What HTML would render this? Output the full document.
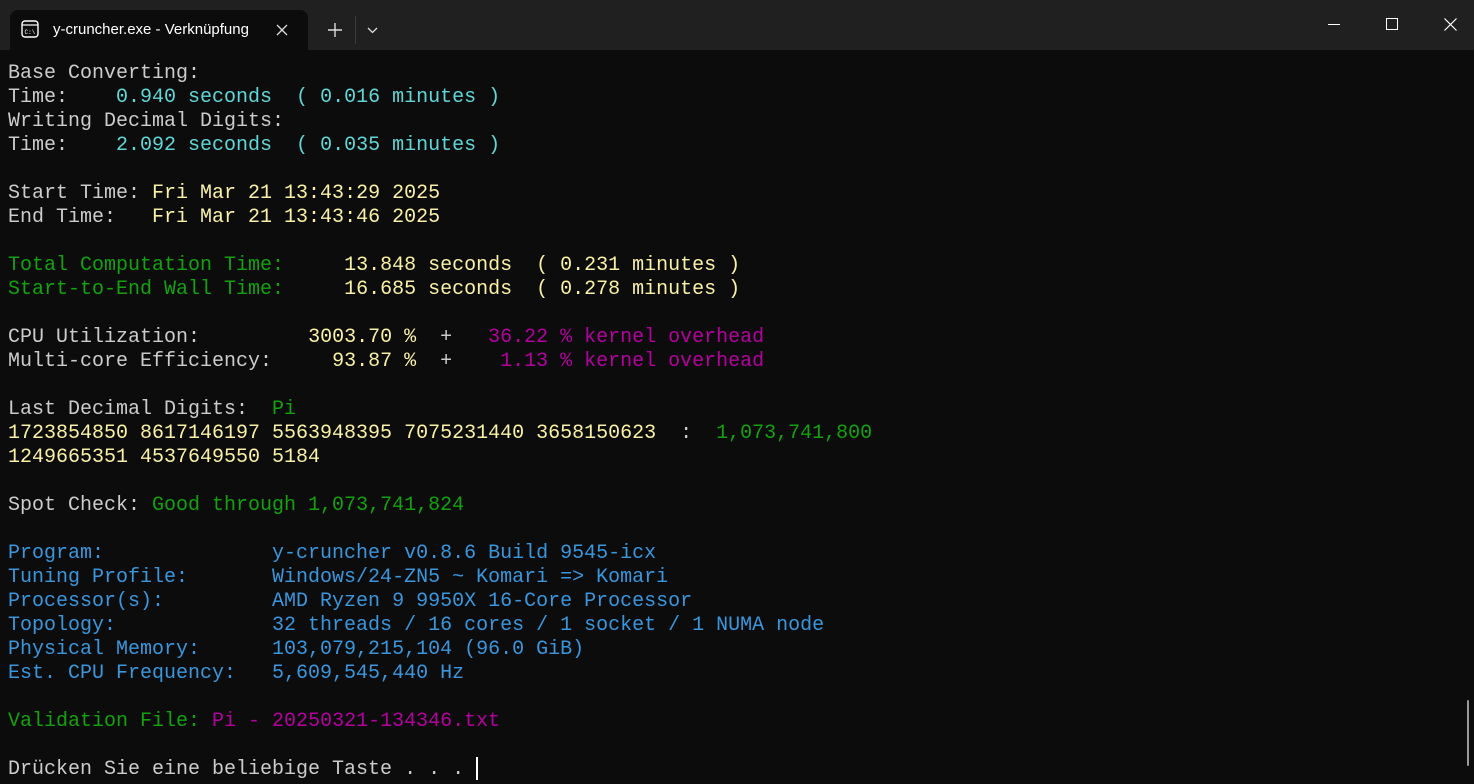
<!DOCTYPE html>
<html><head><style>
html,body{margin:0;padding:0;width:1474px;height:784px;overflow:hidden;background:#0c0c0c;}
#bar{position:absolute;left:0;top:0;width:1474px;height:50px;background:#202020;}
#tab{position:absolute;left:10px;top:10px;width:298px;height:40px;background:#0c0c0c;border-radius:8px 8px 0 0;}
#tab .t{position:absolute;left:43px;top:11px;font:15px "Liberation Sans",sans-serif;color:#fff;}
pre{position:absolute;left:8px;top:62px;margin:0;font:20px/24px "Liberation Mono",monospace;color:#cccccc;}
.c{color:#61d6d6}.y{color:#f9f1a5}.g{color:#13a10e}.m{color:#b4009e}.b{color:#3a96dd}
</style></head><body>
<div id="bar">
<div id="tab">
<svg style="position:absolute;left:11px;top:10px" width="18" height="18" viewBox="0 0 18 18"><rect x="1" y="1" width="16" height="16" rx="3" fill="none" stroke="#fff" stroke-width="1.4"/><line x1="1" y1="5" x2="17" y2="5" stroke="#fff" stroke-width="1.2"/><text x="3.5" y="14" font-size="6" fill="#fff" font-family="Liberation Mono">C:\</text></svg>
<span class="t">y-cruncher.exe - Verknüpfung</span>
<svg style="position:absolute;left:266px;top:14px" width="12" height="12"><path d="M1 1L11 11M11 1L1 11" stroke="#ddd" stroke-width="1.3"/></svg>
</div>
<svg style="position:absolute;left:328px;top:23px" width="14" height="14"><path d="M7 0V14M0 7H14" stroke="#ddd" stroke-width="1.4"/></svg>
<div style="position:absolute;left:355px;top:16px;width:1px;height:28px;background:#3a3a3a"></div>
<svg style="position:absolute;left:367px;top:27px" width="11" height="7"><path d="M1 1L5.5 5.5L10 1" stroke="#ddd" stroke-width="1.3" fill="none"/></svg>
<div style="position:absolute;left:1328px;top:24px;width:12px;height:1px;background:#fff"></div>
<div style="position:absolute;left:1386px;top:18px;width:10px;height:10px;border:1px solid #fff"></div>
<svg style="position:absolute;left:1444px;top:18px" width="13" height="13"><path d="M0.5 0.5L12.5 12.5M12.5 0.5L0.5 12.5" stroke="#fff" stroke-width="1.2"/></svg>
</div>
<pre>Base Converting:
Time:    <span class="c">0.940 seconds  ( 0.016 minutes )</span>
Writing Decimal Digits:
Time:    <span class="c">2.092 seconds  ( 0.035 minutes )</span>

Start Time: <span class="y">Fri Mar 21 13:43:29 2025</span>
End Time:   <span class="y">Fri Mar 21 13:43:46 2025</span>

<span class="g">Total Computation Time:</span>     <span class="y">13.848 seconds  ( 0.231 minutes )</span>
<span class="g">Start-to-End Wall Time:</span>     <span class="y">16.685 seconds  ( 0.278 minutes )</span>

CPU Utilization:         <span class="y">3003.70 %</span>  +   <span class="m">36.22 % kernel overhead</span>
Multi-core Efficiency:     <span class="y">93.87 %</span>  +    <span class="m">1.13 % kernel overhead</span>

Last Decimal Digits:  <span class="g">Pi</span>
<span class="y">1723854850 8617146197 5563948395 7075231440 3658150623</span>  :  <span class="g">1,073,741,800</span>
<span class="y">1249665351 4537649550 5184</span>

Spot Check: <span class="g">Good through 1,073,741,824</span>

<span class="b">Program:              y-cruncher v0.8.6 Build 9545-icx
Tuning Profile:       Windows/24-ZN5 ~ Komari => Komari
Processor(s):         AMD Ryzen 9 9950X 16-Core Processor
Topology:             32 threads / 16 cores / 1 socket / 1 NUMA node
Physical Memory:      103,079,215,104 (96.0 GiB)
Est. CPU Frequency:   5,609,545,440 Hz</span>

<span class="g">Validation File:</span> <span class="m">Pi - 20250321-134346.txt</span>

Drücken Sie eine beliebige Taste . . . </pre>
<div style="position:absolute;left:476px;top:757px;width:2px;height:23px;background:#fff"></div>
<div style="position:absolute;left:1467px;top:700px;width:2px;height:66px;background:#9a9a9a;border-radius:1px"></div>
</body></html>
